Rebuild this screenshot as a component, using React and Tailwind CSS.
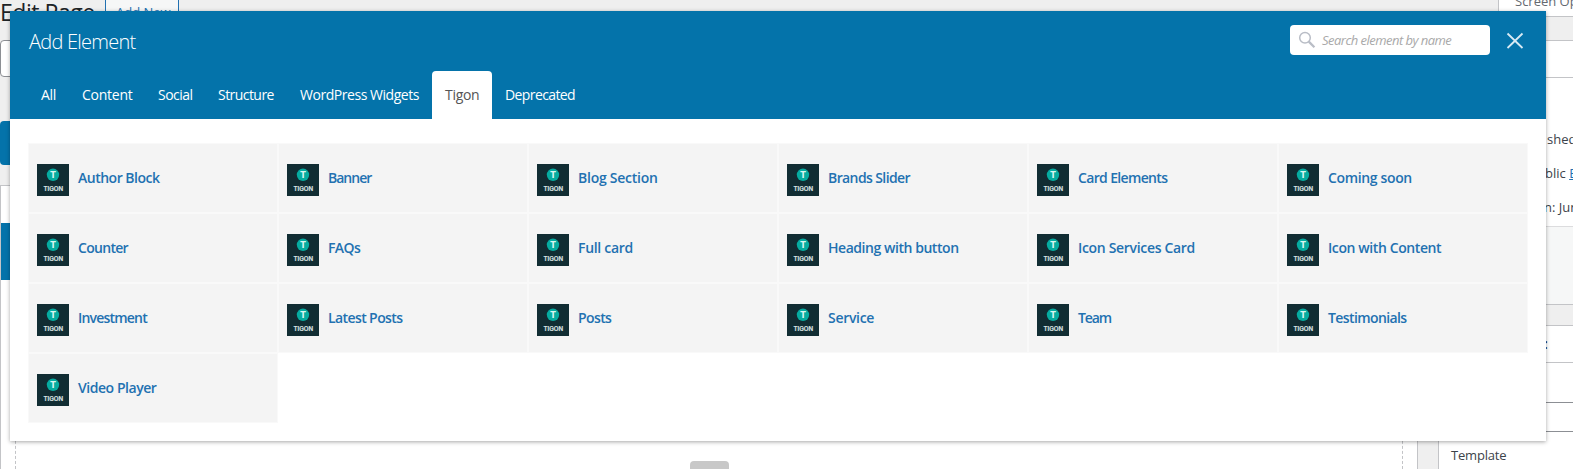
const tabs = [
  { label: "All", box: "w-[41px] tracking-[-0.3px]" },
  { label: "Content", box: "w-[76px] tracking-[-0.25px]" },
  { label: "Social", box: "w-[60px] tracking-[-0.5px]" },
  { label: "Structure", box: "w-[82px] tracking-[-0.55px]" },
  { label: "WordPress Widgets", box: "w-[145px] tracking-[-0.46px]" },
  { label: "Tigon", box: "w-[60px] tracking-[-0.3px]", active: true },
  { label: "Deprecated", box: "w-[96px] tracking-[-0.6px]" },
];

const elements = [
  { name: "Author Block", tracking: "tracking-[-0.5px]" },
  { name: "Banner", tracking: "tracking-[-1px]" },
  { name: "Blog Section", tracking: "tracking-[-0.25px]" },
  { name: "Brands Slider", tracking: "tracking-[-0.6px]" },
  { name: "Card Elements", tracking: "tracking-[-0.65px]" },
  { name: "Coming soon", tracking: "tracking-[-0.35px]" },
  { name: "Counter", tracking: "tracking-[-0.7px]" },
  { name: "FAQs", tracking: "tracking-[-0.6px]" },
  { name: "Full card", tracking: "tracking-[-0.3px]" },
  { name: "Heading with button", tracking: "tracking-[-0.45px]" },
  { name: "Icon Services Card", tracking: "tracking-[-0.32px]" },
  { name: "Icon with Content", tracking: "tracking-[-0.4px]" },
  { name: "Investment", tracking: "tracking-[-0.8px]" },
  { name: "Latest Posts", tracking: "tracking-[-0.6px]" },
  { name: "Posts", tracking: "tracking-[-0.6px]" },
  { name: "Service", tracking: "tracking-[-0.3px]" },
  { name: "Team", tracking: "tracking-[-1.1px]" },
  { name: "Testimonials", tracking: "tracking-[-0.6px]" },
  { name: "Video Player", tracking: "tracking-[-0.45px]" },
];

function TigonIcon() {
  return (
    <svg width="32" height="32" viewBox="0 0 32 32" className="shrink-0">
      <rect width="32" height="32" fill="#112d33" />
      <circle cx="16" cy="10.8" r="6.2" fill="#06aca0" />
      <text x="16" y="14.1" textAnchor="middle" fontSize="9" fontWeight="800" fill="#d9f5f1" fontFamily="Inter, sans-serif">T</text>
      <text x="16.4" y="26.9" textAnchor="middle" fontSize="6.3" fontWeight="600" textLength="19.6" lengthAdjust="spacingAndGlyphs" fill="#dbe3e4" stroke="#dbe3e4" strokeWidth="0.2" fontFamily="Inter, sans-serif">TIGON</text>
    </svg>
  );
}

function EditorPage() {
  return (
    <div className="flex h-full w-full bg-[#efefef]">
      <div className="flex w-[1418px] shrink-0 flex-col">
        <div className="flex h-[40px] items-start">
          <h1 className="w-[105px] shrink-0 whitespace-nowrap text-[23px] leading-[24px] tracking-[-0.45px] text-[#1d2327]">Edit Page</h1>
          <div className="h-[26px] w-[74px] shrink-0 whitespace-nowrap border-x border-b border-[#2271b1] bg-[#f6f7f7] pl-[10px] text-[13px] leading-[24px] text-[#2271b1]">Add New</div>
        </div>
        <div className="h-[37px] w-[1418px] rounded border border-[#8c8f94] bg-white" />
        <div className="mt-[44px] h-[44px] w-[160px] rounded bg-[#0473aa]" />
        <div className="mt-[20px] flex grow flex-col border border-b-0 border-[#c3c4c7] bg-white pt-[37px]">
          <div className="h-[57px] bg-[#0473aa]" />
          <div className="mx-[14px] flex grow items-end justify-center border-x border-dashed border-[#c3c4c7]">
            <div className="h-[8px] w-[39px] rounded-t bg-[#c8c8c8]" />
          </div>
        </div>
      </div>
      <div className="flex grow flex-col pl-[20px]">
        <div className="ml-[60px] h-[17px] overflow-hidden whitespace-nowrap border-b border-l border-[#c3c4c7] bg-white pl-[16px] text-[13px] leading-[20px] text-[#646970]">
          <div className="-mt-[9px]">Screen Op</div>
        </div>
        <div className="mt-[23px] h-[38px] border-y border-l border-[#c3c4c7] bg-white" />
        <div className="flex h-[148px] flex-col overflow-hidden whitespace-nowrap border-l border-[#c3c4c7] bg-white pl-[108px] pt-[44px] text-[13px] leading-[34px] text-[#3c434a]">
          <div>shed</div>
          <div className="-ml-[2px]">blic <span className="text-[#2271b1] underline">Edit</span></div>
          <div className="-ml-[3px]">n: Jun</div>
        </div>
        <div className="h-[79px] border border-r-0 border-[#c3c4c7] border-t-[#dcdcde] bg-[#f6f7f7]" />
        <div className="mt-[20px] flex grow flex-col border-l border-t border-[#c3c4c7] bg-white">
          <div className="h-[37px] border-b border-[#c3c4c7] pl-[105px] text-[14px] font-semibold leading-[35px] text-[#1d2327]">:</div>
          <div className="h-[40px] border-b border-[#8c8f94]" />
          <div className="h-[29px] border-b border-[#8c8f94]" />
          <div className="pl-[12px] pt-[13px] text-[13px] leading-[20px] tracking-[-0.2px] text-[#3c434a]">Template</div>
        </div>
      </div>
    </div>
  );
}

function AddElementDialog() {
  return (
    <div className="absolute left-[10px] top-[11px] flex h-[430px] w-[1536px] flex-col bg-white shadow-[0_1px_4px_rgba(0,0,0,0.35)]">
      <header className="flex h-[108px] shrink-0 flex-col justify-between bg-[#0473aa] text-white">
        <div className="flex h-[60px] justify-between pl-[19px] pr-[22px]">
          <h2 className="pt-[16px] text-[20px] font-light leading-[30px] tracking-[-0.75px]">Add Element</h2>
          <div className="flex pt-[14px]">
            <div className="flex h-[30px] w-[200px] items-center rounded bg-white pl-[8px]">
              <svg width="18" height="18" viewBox="0 0 18 18" fill="none" stroke="#b9bdc6">
                <circle cx="7" cy="6.8" r="5.3" strokeWidth="1.5" />
                <path d="M10.8 10.6 L16.4 16.2" strokeWidth="2.3" />
              </svg>
              <span className="whitespace-nowrap pl-[6px] text-[13px] italic leading-[20px] tracking-[-0.53px] text-[#a9a9a9]">Search element by name</span>
            </div>
            <svg className="ml-[16px] mt-[7px]" width="18" height="18" viewBox="0 0 18 18" fill="none" stroke="#d8eaf4" strokeWidth="1.8">
              <path d="M1.5 1.5 L16.5 16 M16.5 1.5 L1.5 16" />
            </svg>
          </div>
        </div>
        <nav className="flex h-[48px] pl-[18px]">
          {tabs.map((t) => (
            <div
              key={t.label}
              className={`${t.box} ${t.active ? "rounded-t bg-white text-[#555]" : "text-white"} shrink-0 whitespace-nowrap pl-[13px] text-[14px] leading-[48px]`}
            >
              {t.label}
            </div>
          ))}
        </nav>
      </header>
      <ul className="ml-[18px] mt-[24px] grid w-[1500px] grid-cols-6">
        {elements.map(({ name, tracking }) => (
          <li key={name} className="flex h-[70px] items-center border border-[#f9f9f9] bg-[#f4f4f4] pl-[8px] pt-[4px]">
            <TigonIcon />
            <span className={`${tracking} -mt-[4px] whitespace-nowrap pl-[9px] text-[14px] font-semibold leading-[20px] text-[#2271b1]`}>{name}</span>
          </li>
        ))}
      </ul>
    </div>
  );
}

export default function App() {
  return (
    <div className="relative h-[469px] w-[1573px] overflow-hidden font-['Open_Sans',sans-serif]">
      <EditorPage />
      <AddElementDialog />
    </div>
  );
}
